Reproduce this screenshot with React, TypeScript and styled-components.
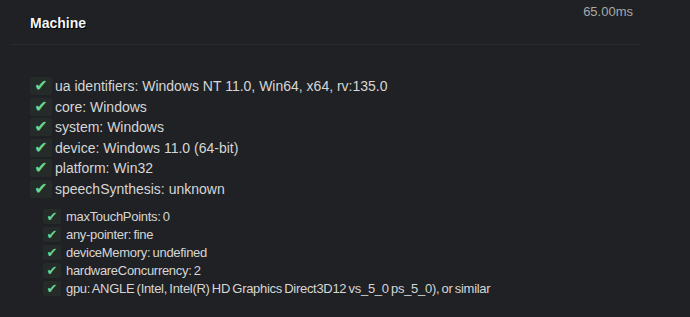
import React from 'react';
import styled, { createGlobalStyle } from 'styled-components';

type Check = { label: string; value: string };

const mainChecks: Check[] = [
  { label: 'ua identifiers', value: 'Windows NT 11.0, Win64, x64, rv:135.0' },
  { label: 'core', value: 'Windows' },
  { label: 'system', value: 'Windows' },
  { label: 'device', value: 'Windows 11.0 (64-bit)' },
  { label: 'platform', value: 'Win32' },
  { label: 'speechSynthesis', value: 'unknown' },
];

const hardwareChecks: Check[] = [
  { label: 'maxTouchPoints', value: '0' },
  { label: 'any-pointer', value: 'fine' },
  { label: 'deviceMemory', value: 'undefined' },
  { label: 'hardwareConcurrency', value: '2' },
  { label: 'gpu', value: 'ANGLE (Intel, Intel(R) HD Graphics Direct3D12 vs_5_0 ps_5_0), or similar' },
];

export default function App() {
  return (
    <>
      <GlobalStyle />
      <Panel>
        <Header>
          <Title>Machine</Title>
          <Timing>65.00ms</Timing>
        </Header>

        <Body>
          <List>
            {mainChecks.map((c) => (
              <Row key={c.label} $small={false}>
                <CheckBox $small={false}>✔</CheckBox>
                <span>
                  {c.label}: {c.value}
                </span>
              </Row>
            ))}
          </List>

          <SubList>
            {hardwareChecks.map((c) => (
              <Row key={c.label} $small>
                <CheckBox $small>✔</CheckBox>
                <span>
                  {c.label}: {c.value}
                </span>
              </Row>
            ))}
          </SubList>
        </Body>
      </Panel>
    </>
  );
}

const GlobalStyle = createGlobalStyle`
  html, body {
    margin: 0;
    background: #202124;
  }
  body {
    font-family: "Liberation Sans", Arial, sans-serif;
    color: #dcdcdc;
  }
`;

const Panel = styled.div`
  width: 630px;
  margin-left: 10px;
  min-height: 317px;
`;

const Header = styled.div`
  position: relative;
  height: 44px;
  border-bottom: 1px solid #2a2b2e;
`;

const Title = styled.h2`
  margin: 0;
  padding: 15px 0 0 20px;
  font-size: 14px;
  font-weight: 700;
  color: #f4f6f8;
  text-shadow: 1px 1px 0 #000, -1px 0 0 rgba(0, 0, 0, 0.6);
`;

const Timing = styled.span`
  position: absolute;
  top: 4px;
  right: 7px;
  font-size: 13px;
  color: #a7a9ab;
`;

const Body = styled.div`
  padding: 32px 0 0 20px;
`;

const List = styled.div`
  display: flex;
  flex-direction: column;
  gap: 2.6px;
`;

const SubList = styled.div`
  display: flex;
  flex-direction: column;
  gap: 3px;
  margin: 11px 0 0 13px;
`;

const Row = styled.div<{ $small: boolean }>`
  display: flex;
  align-items: center;
  gap: ${({ $small }) => ($small ? '5px' : '3px')};
  font-size: ${({ $small }) => ($small ? '13px' : '14px')};
  line-height: ${({ $small }) => ($small ? '15px' : '18px')};
  color: #d6d6d6;
  ${({ $small }) => ($small ? 'letter-spacing: -0.3px; word-spacing: -1px;' : '')}
`;

const CheckBox = styled.span<{ $small: boolean }>`
  display: inline-flex;
  align-items: center;
  justify-content: center;
  flex: none;
  width: ${({ $small }) => ($small ? '18px' : '22px')};
  height: ${({ $small }) => ($small ? '15px' : '18px')};
  border-radius: 2px;
  background: #252b28;
  color: #66d690;
  letter-spacing: 0;
  font-family: "DejaVu Sans", sans-serif;
  font-size: ${({ $small }) => ($small ? '13px' : '16px')};
`;
